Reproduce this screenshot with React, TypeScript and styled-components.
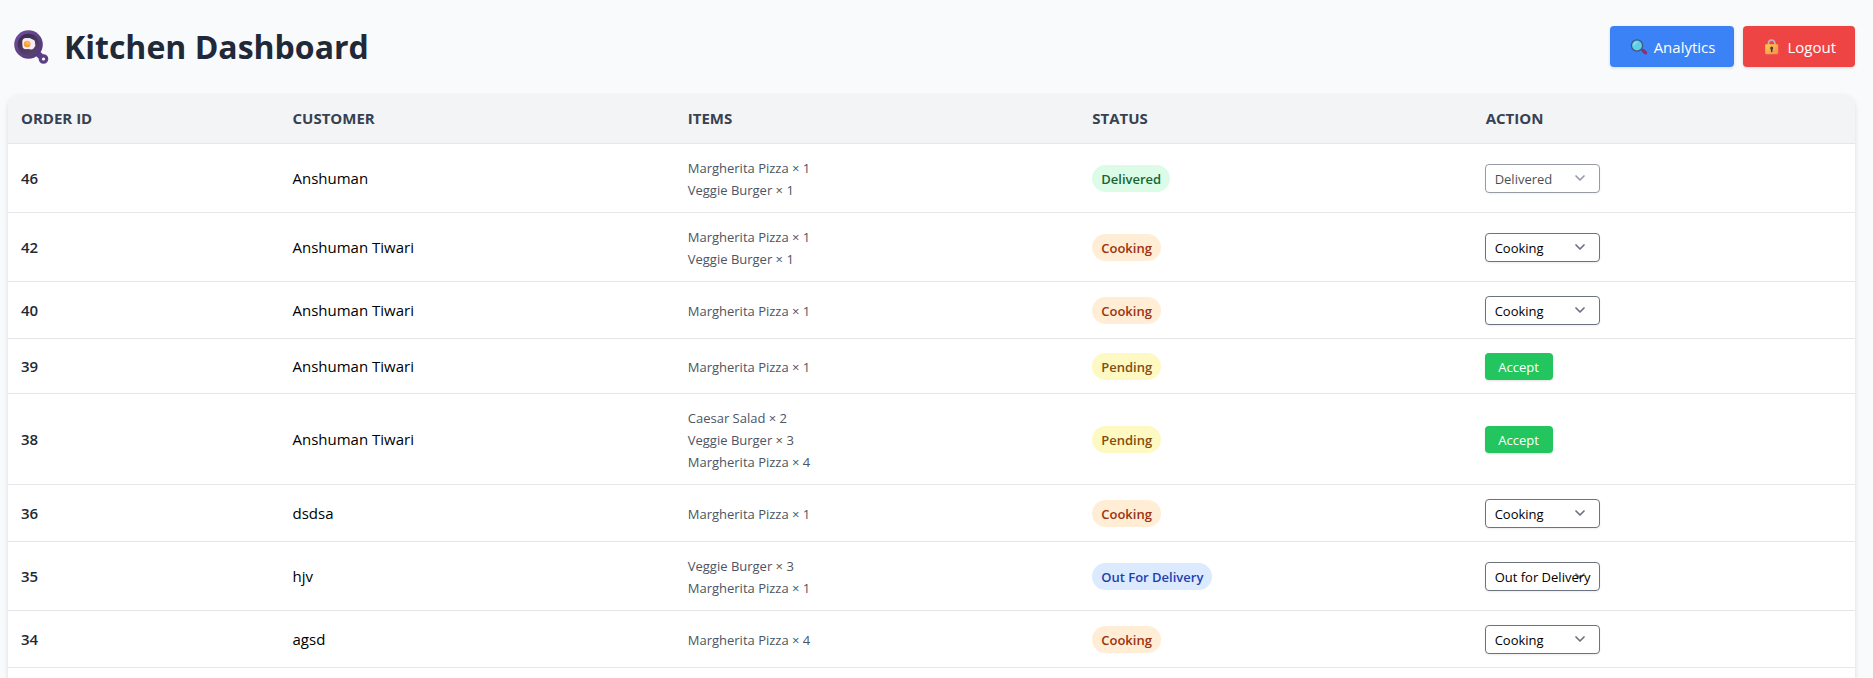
import React, { useState } from "react";
import styled, { createGlobalStyle } from "styled-components";

const GlobalStyle = createGlobalStyle`
  *, *::before, *::after { box-sizing: border-box; }
  body {
    margin: 0;
    background: #f9fafb;
    color: #000;
    font-family: "Segoe UI", "Open Sans", "Noto Sans", sans-serif;
    font-size: 15px;
    line-height: 22px;
  }
`;

const Page = styled.div`
  display: flex;
  flex-direction: column;
  min-height: 100vh;
  padding: 0 18px 0 8px;
  background: #f9fafb;
`;

const Header = styled.header`
  display: flex;
  align-items: center;
  justify-content: space-between;
  padding: 26px 0 27px 6px;
`;

const Title = styled.h1`
  display: flex;
  align-items: center;
  gap: 15px;
  margin: 0;
  color: #1f2937;
  font-size: 32px;
  line-height: 40px;
  font-weight: 700;
`;

const Actions = styled.div`
  display: flex;
  gap: 9px;
`;

const HeaderButton = styled.button<{ $color: string }>`
  display: flex;
  align-items: center;
  gap: 6px;
  height: 41px;
  padding: 0 19px 0 20px;
  border: 0;
  border-radius: 4px;
  background: ${(p) => p.$color};
  box-shadow: 0 1px 3px rgba(0, 0, 0, 0.14);
  color: #fff;
  font: inherit;
  cursor: pointer;
`;

const Card = styled.main`
  flex: 1;
  overflow: hidden;
  border-radius: 12px 12px 0 0;
  background: #fff;
  box-shadow: 0 4px 6px rgba(0, 0, 0, 0.08), 0 1px 4px rgba(0, 0, 0, 0.05);
`;

const Table = styled.table`
  width: 100%;
  table-layout: fixed;
  border-collapse: separate;
  border-spacing: 0;
`;

const HeadCell = styled.th<{ $width: string }>`
  width: ${(p) => p.$width};
  height: 50px;
  padding: 0 13px 2px;
  border-bottom: 1px solid #e5e7eb;
  background: #f3f4f6;
  color: #374151;
  font-weight: 700;
  text-align: left;
  text-transform: uppercase;
`;

const Cell = styled.td`
  padding: 12px 13px;
  border-bottom: 1px solid #e5e7eb;
  vertical-align: middle;
`;

const IdCell = styled(Cell)`
  color: #1f2937;
  font-weight: 600;
`;

const ItemsCell = styled(Cell)`
  padding-top: 13px;
  padding-bottom: 11px;
`;

const ActionCell = styled(Cell)`
  padding: 14px 12px 13px;
`;

const ItemList = styled.ul`
  margin: 0;
  padding: 0;
  list-style: none;
  color: #4b5563;
  font-size: 13px;
`;

type Status = "Delivered" | "Cooking" | "Pending" | "Out For Delivery";

const tones: Record<Status, [string, string]> = {
  Delivered: ["#dcfce7", "#166534"],
  Cooking: ["#ffedd5", "#9a3412"],
  Pending: ["#fef9c3", "#854d0e"],
  "Out For Delivery": ["#dbeafe", "#1e40af"],
};

const Badge = styled.span<{ $status: Status }>`
  display: block;
  width: fit-content;
  height: 27px;
  padding: 0 9px;
  border-radius: 14px;
  background: ${(p) => tones[p.$status][0]};
  color: ${(p) => tones[p.$status][1]};
  font-size: 13px;
  line-height: 29px;
  font-weight: 600;
`;

const SelectBox = styled.div<{ $disabled: boolean }>`
  position: relative;
  width: 115px;
  height: 29px;
  border-radius: 4px;
  background: #fff;
  box-shadow: 0 1px 2px rgba(0, 0, 0, 0.08);
  opacity: ${(p) => (p.$disabled ? 0.7 : 1)};

  svg {
    position: absolute;
    top: 5px;
    right: 11px;
  }
`;

const Select = styled.select`
  position: relative;
  display: block;
  width: 100%;
  height: 100%;
  padding: 1px 0 0 9px;
  border: 1px solid #6b7280;
  border-radius: 4px;
  background: transparent;
  color: #000;
  font: inherit;
  font-size: 13px;
  appearance: none;
  opacity: 1;
`;

const AcceptButton = styled.button`
  display: block;
  width: 68px;
  height: 27px;
  padding: 1px 0 0;
  border: 0;
  border-radius: 4px;
  background: #22c55e;
  box-shadow: 0 1px 2px rgba(0, 0, 0, 0.12);
  color: #fff;
  font: inherit;
  font-size: 13px;
  cursor: pointer;
`;

const PanIcon = () => (
  <svg width="35" height="35" viewBox="0 0 35 35" aria-hidden="true">
    <defs>
      <linearGradient id="pan" x1="0" y1="0" x2="1" y2="1">
        <stop offset="0" stopColor="#6f4d9c" />
        <stop offset="1" stopColor="#503675" />
      </linearGradient>
      <linearGradient id="panInner" x1="0.2" y1="0" x2="0.7" y2="1">
        <stop offset="0" stopColor="#3b2a4c" />
        <stop offset="1" stopColor="#5a4370" />
      </linearGradient>
      <radialGradient id="yolk" cx="0.6" cy="0.3" r="0.8">
        <stop offset="0" stopColor="#ffc84a" />
        <stop offset="1" stopColor="#f08a24" />
      </radialGradient>
    </defs>
    <path d="M22 23L28 28.500" stroke="#5c3f88" strokeWidth="6" />
    <circle cx="29.500" cy="30" r="3.200" fill="#f9fafb" stroke="#5c3f88" strokeWidth="3.200" />
    <circle cx="14.500" cy="15.500" r="14.300" fill="url(#pan)" />
    <circle cx="14.500" cy="15.500" r="10.800" fill="url(#panInner)" />
    <path d="M8.200 13.500C8 10 10.500 8.600 13.500 9.200C16 8.300 17.500 10 19.200 10.800C21.500 11.500 20.800 13.500 21.300 15.500C21.800 17.500 20.200 18.200 19.300 19.800C17.800 21.300 16 20 13.500 20.100C10 20.500 8.300 19.300 8.500 17Z" fill="#f5eafa" />
    <circle cx="13.200" cy="15" r="3.300" fill="url(#yolk)" />
  </svg>
);

const SearchIcon = () => (
  <svg width="18" height="18" viewBox="0 0 18 18" aria-hidden="true">
    <path d="M11.500 11L14.500 13.800" stroke="#9b6b8f" strokeWidth="2" />
    <path d="M13 12.500L15.500 14.800" stroke="#8b3168" strokeWidth="3.400" strokeLinecap="round" />
    <circle cx="7" cy="7.500" r="5.600" fill="#5fcfe8" stroke="#41557c" strokeWidth="1.300" />
    <path d="M4 7A3.500 3.500 0 0 1 7 4" stroke="#94e5f0" strokeWidth="1.200" fill="none" strokeLinecap="round" />
  </svg>
);

const LockIcon = () => (
  <svg width="18" height="18" viewBox="0 0 18 18" aria-hidden="true">
    <defs>
      <linearGradient id="lockBody" x1="0" y1="0" x2="1" y2="1">
        <stop offset="0" stopColor="#ffd045" />
        <stop offset="1" stopColor="#f28b50" />
      </linearGradient>
    </defs>
    <path d="M5.500 7.500V5.300A3.200 3.200 0 0 1 11.900 5.300V7.500" fill="none" stroke="#c0aeb9" strokeWidth="1.700" />
    <rect x="2.200" y="6.300" width="13" height="10" rx="1.200" fill="url(#lockBody)" />
    <circle cx="8.700" cy="10" r="1.500" fill="#4a3945" />
    <path d="M8.700 10V13.500" stroke="#4a3945" strokeWidth="1.600" strokeLinecap="round" />
  </svg>
);

const Chevron = () => (
  <svg width="18" height="18" viewBox="0 0 18 18" aria-hidden="true">
    <path d="M5 7L9 11L13 7" fill="none" stroke="#6b7280" strokeWidth="1.700" strokeLinecap="round" strokeLinejoin="round" />
  </svg>
);

interface Order {
  id: number;
  customer: string;
  items: [string, number][];
  status: Status;
}

const orders: Order[] = [
  { id: 46, customer: "Anshuman", items: [["Margherita Pizza", 1], ["Veggie Burger", 1]], status: "Delivered" },
  { id: 42, customer: "Anshuman Tiwari", items: [["Margherita Pizza", 1], ["Veggie Burger", 1]], status: "Cooking" },
  { id: 40, customer: "Anshuman Tiwari", items: [["Margherita Pizza", 1]], status: "Cooking" },
  { id: 39, customer: "Anshuman Tiwari", items: [["Margherita Pizza", 1]], status: "Pending" },
  { id: 38, customer: "Anshuman Tiwari", items: [["Caesar Salad", 2], ["Veggie Burger", 3], ["Margherita Pizza", 4]], status: "Pending" },
  { id: 36, customer: "dsdsa", items: [["Margherita Pizza", 1]], status: "Cooking" },
  { id: 35, customer: "hjv", items: [["Veggie Burger", 3], ["Margherita Pizza", 1]], status: "Out For Delivery" },
  { id: 34, customer: "agsd", items: [["Margherita Pizza", 4]], status: "Cooking" },
];

const columns: [string, string][] = [
  ["Order ID", "14.7%"],
  ["Customer", "21.4%"],
  ["Items", "21.9%"],
  ["Status", "21.3%"],
  ["Action", "20.7%"],
];

const OrderRow = ({ order }: { order: Order }) => {
  const [status, setStatus] = useState<Status>(order.status);
  const done = status === "Delivered";
  return (
    <tr>
      <IdCell>{order.id}</IdCell>
      <Cell>{order.customer}</Cell>
      <ItemsCell>
        <ItemList>
          {order.items.map(([name, count]) => (
            <li key={name}>{`${name} × ${count}`}</li>
          ))}
        </ItemList>
      </ItemsCell>
      <Cell>
        <Badge $status={status}>{status}</Badge>
      </Cell>
      <ActionCell>
        {status === "Pending" ? (
          <AcceptButton type="button" onClick={() => setStatus("Cooking")}>
            Accept
          </AcceptButton>
        ) : (
          <SelectBox $disabled={done}>
            <Chevron />
            <Select
              aria-label={`Status of order ${order.id}`}
              value={status}
              disabled={done}
              onChange={(e) => setStatus(e.target.value as Status)}
            >
              <option value="Cooking">Cooking</option>
              <option value="Out For Delivery">Out for Delivery</option>
              <option value="Delivered">Delivered</option>
            </Select>
          </SelectBox>
        )}
      </ActionCell>
    </tr>
  );
};

export default function App() {
  return (
    <>
      <GlobalStyle />
      <Page>
        <Header>
          <Title>
            <PanIcon />
            Kitchen Dashboard
          </Title>
          <Actions>
            <HeaderButton type="button" $color="#3b82f6">
              <SearchIcon />
              Analytics
            </HeaderButton>
            <HeaderButton type="button" $color="#ef4444">
              <LockIcon />
              Logout
            </HeaderButton>
          </Actions>
        </Header>
        <Card>
          <Table>
            <thead>
              <tr>
                {columns.map(([label, width]) => (
                  <HeadCell key={label} $width={width} scope="col">
                    {label}
                  </HeadCell>
                ))}
              </tr>
            </thead>
            <tbody>
              {orders.map((order) => (
                <OrderRow key={order.id} order={order} />
              ))}
            </tbody>
          </Table>
        </Card>
      </Page>
    </>
  );
}
